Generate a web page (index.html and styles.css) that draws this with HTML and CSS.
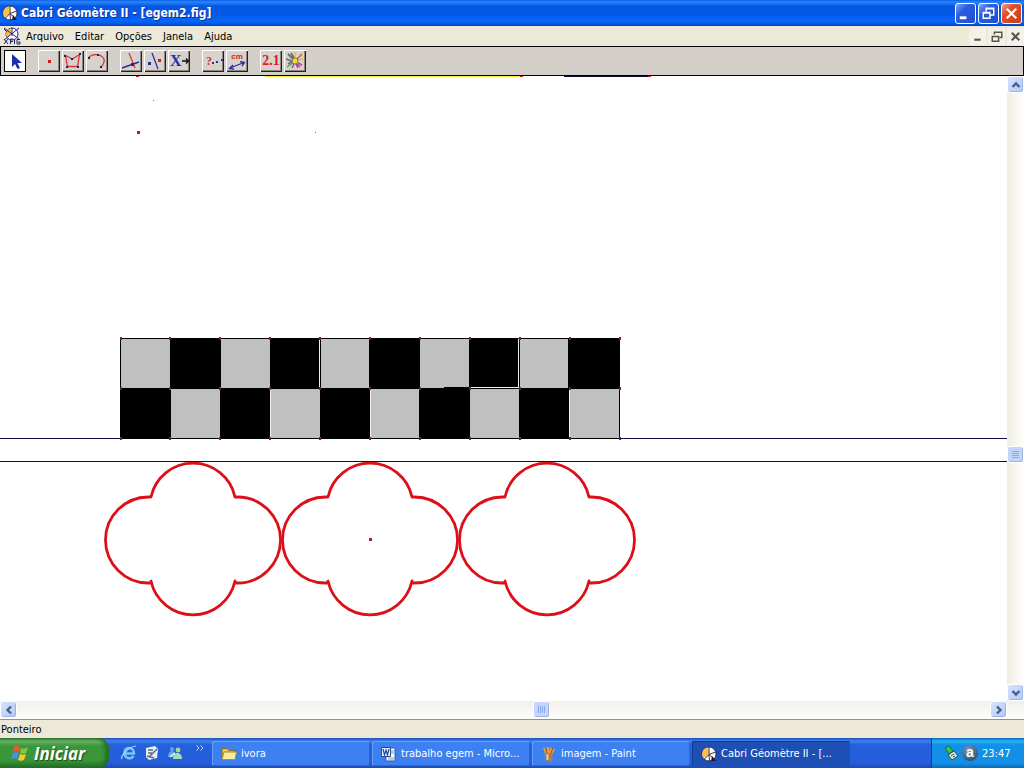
FILE: index.html
```html
<!DOCTYPE html>
<html lang="pt">
<head>
<meta charset="utf-8">
<title>Cabri Géomètre II - [egem2.fig]</title>
<link rel="stylesheet" href="styles.css">
</head>
<body>
<svg class="defs" aria-hidden="true">
  <defs>
    <symbol id="cabri" viewBox="0 0 16 16">
      <circle cx="8" cy="8" r="7" fill="#fff" stroke="#221a2c" stroke-width=".8"/>
      <path d="M7 1.500A6.500 6.500 0 0 0 2.500 12L8 9Z" fill="#ffc04a"/>
      <path d="M3.500 13L8 8.500L8 1M8 8.500L14.500 6M8 8.500L13 13M8 9L8.500 15" fill="none" stroke="#221a2c" stroke-width=".9"/>
      <path d="M11 10l4 5h-5z" fill="#221a2c"/>
    </symbol>
    <symbol id="quatrefoil" viewBox="0 0 180 156" overflow="visible">
      <path d="M48 36A43 43 0 0 1 132 36H134.500A43 43 0 0 1 134.500 122H132V120A43 43 0 0 1 48 120V122H45.500A43 43 0 0 1 45.500 36Z" fill="none" stroke="#dc1018" stroke-width="2.800" stroke-linejoin="round"/>
    </symbol>
    <symbol id="arrow" viewBox="0 0 10 10">
      <path d="M1.500 7L5 3.500L8.500 7" fill="none" stroke="#43608c" stroke-width="2.400"/>
    </symbol>
  </defs>
</svg>
<div class="desktop">
  <header class="titlebar">
    <svg class="icon16"><use href="#cabri"/></svg>
    <h1 class="title">Cabri Géomètre II - [egem2.fig]</h1>
    <div class="winbuttons">
      <button class="winbtn" aria-label="Minimizar"><svg viewBox="0 0 20 20"><path d="M4 13h7v3H4z" fill="#fff"/></svg></button>
      <button class="winbtn" aria-label="Restaurar"><svg viewBox="0 0 20 20"><path d="M7.500 8V4.500h8v7H12M7 5h9M4.500 9h7v6h-7zM4 9.500h8" fill="none" stroke="#fff" stroke-width="1.500"/></svg></button>
      <button class="winbtn winbtn-close" aria-label="Fechar"><svg viewBox="0 0 20 20"><path d="M5 5l10 10M15 5L5 15" stroke="#fff" stroke-width="2.400"/></svg></button>
    </div>
  </header>

  <nav class="menubar">
    <svg class="figicon" viewBox="0 0 18 18">
      <circle cx="9" cy="7" r="6" fill="#fff" stroke="#29238e"/>
      <path d="M8 1.500A5.500 5.500 0 0 0 4 10L8 7Z" fill="#ffb92e"/>
      <path d="M1 1l15 11M16 1L1 13M9 1v8M1 2l3 3" stroke="#29238e" fill="none"/>
      <path d="M1 12l4 5M5 12l-4 5M7.500 17v-5H10M7.500 14.500H10M11.500 12v5M17 12.500h-3V17h3v-2h-2" stroke="#231d6c" fill="none"/>
    </svg>
    <div class="menus">
      <button class="menu">Arquivo</button>
      <button class="menu">Editar</button>
      <button class="menu">Opções</button>
      <button class="menu">Janela</button>
      <button class="menu">Ajuda</button>
    </div>
    <div class="mdibuttons">
      <button class="mdibtn" aria-label="Minimizar figura"><svg viewBox="0 0 16 16"><path d="M5 11h6" stroke="#59564c" stroke-width="2"/></svg></button>
      <button class="mdibtn" aria-label="Restaurar figura"><svg viewBox="0 0 16 16"><path d="M6 6V4h7v5h-2M6 4h7M4 8h6v4.500H4zM4 8h6" fill="none" stroke="#59564c" stroke-width="1.400"/></svg></button>
      <button class="mdibtn" aria-label="Fechar figura"><svg viewBox="0 0 16 16"><path d="M4.500 4.500l7 7M11.500 4.500l-7 7" stroke="#59564c" stroke-width="2"/></svg></button>
    </div>
  </nav>

  <div class="toolbar" role="toolbar" aria-label="Ferramentas">
    <div class="tools">
      <button class="tool tool-active" aria-label="Ponteiro"><svg viewBox="0 0 22 22"><path d="M8 4v13l3-3 2.500 5 2.500-1-2.500-5H18z" fill="#1c2fb0"/></svg></button>
    </div>
    <div class="tools">
      <button class="tool" aria-label="Ponto"><svg viewBox="0 0 22 22"><path d="M10 10h3v3h-3z" fill="#e01820"/></svg></button>
      <button class="tool" aria-label="Polígono"><svg viewBox="0 0 22 22"><path d="M3.500 5.500L10.500 9L17.500 4.500L15.500 16.500H5.500z" fill="none" stroke="#d8343c" stroke-width="1.300"/><path d="M2 5h2v2H2zM9 8h2v2H9zM17 3h2v2h-2zM15 16h2v2h-2zM4 16h2v2H4z" fill="#22204c"/></svg></button>
      <button class="tool" aria-label="Curvas"><svg viewBox="0 0 22 22"><path d="M3 7C8 3 15 4 18 9c1 4-1 6-3 8" fill="none" stroke="#d8343c" stroke-width="1.300"/><path d="M2 7h2v2H2zM11 4h2v2h-2zM14 16h2v2h-2z" fill="#22204c"/></svg></button>
    </div>
    <div class="tools">
      <button class="tool" aria-label="Construir"><svg viewBox="0 0 22 22"><path d="M2 18l17-6" stroke="#2630a4" stroke-width="1.400"/><path d="M9 3l6 15" stroke="#d8343c" stroke-width="1.300"/><path d="M11 13h3v3h-3z" fill="#33236c"/></svg></button>
      <button class="tool" aria-label="Transformar"><svg viewBox="0 0 22 22"><path d="M8 3l6 16" stroke="#2630a4" stroke-width="1.300"/><path d="M4 12h3v3H4z" fill="#2630a4"/><path d="M14 9h3v3h-3z" fill="#e01820"/></svg></button>
      <button class="tool tool-x" aria-label="Macro">X<svg class="xarrow" viewBox="0 0 8 8"><path d="M0 4h6M4 1.500L6.500 4L4 6.500" fill="none" stroke="#111" stroke-width="1.300"/></svg></button>
    </div>
    <div class="tools">
      <button class="tool tool-q" aria-label="Propriedades">?<svg class="qdots" viewBox="0 0 12 8"><path d="M0 5h2v2H0zM4 4h2v2H4zM9 2h2v2H9z" fill="#2630a4"/></svg></button>
      <button class="tool tool-cm" aria-label="Medir">cm<svg viewBox="0 0 18 9"><path d="M2 7L16 1.500M5 4L1.500 7.500L6 8M12 .500L16.500 1.500L14 5" fill="none" stroke="#2630a4" stroke-width="1.300"/></svg></button>
    </div>
    <div class="tools">
      <button class="tool tool-num" aria-label="Exibir">2.1</button>
      <button class="tool" aria-label="Desenho"><svg viewBox="0 0 22 22"><path d="M11 2v5M19 9l-5 1" stroke="#e8c01c" stroke-width="1.400"/><path d="M18 15l-4-2M14 18l-2-4M8 18l2-4M16 17l-3-3" stroke="#b03c9c" stroke-width="1.400"/><path d="M4 14l5-3M2 9l6 2M4 4l5 5M7 3l3 5" stroke="#687078" stroke-width="1.800"/><circle cx="11" cy="11" r="3" fill="#f6dc22" stroke="#777a68"/><path d="M3 17l6-4" stroke="#3da75a" stroke-width="1.300"/><path d="M13 9l5-5" stroke="#e34a2e" stroke-width="1.300"/></svg></button>
    </div>
  </div>

  <main class="work">
    <svg class="drawing" role="img" aria-label="Figura geométrica">
      <g transform="translate(0 -76)">
        <path d="M265 76h255" stroke="#f2ee3c" stroke-width="2"/>
        <path d="M564 76h85" stroke="#0c0a3c" stroke-width="2"/>
        <path d="M136 75h3v2h-3zM520 75h3v2h-3zM648 75h3v2h-3zM137 131h3v3h-3z" fill="#c8141c"/>
        <path d="M153 100h1v1h-1zM315 132h1v1h-1z" fill="#777"/>
        <g shape-rendering="crispEdges">
          <path d="M120 338h500v101H120z" fill="#000"/>
          <path d="M121 339h49v49h-49zM221 339h49v49h-49zM321 339h48v49h-48zM420 339h49v49h-49zM520 339h48v49h-48zM171 389h49v49h-49zM271 389h49v49h-49zM371 389h48v49h-48zM470 389h49v49h-49zM570 389h49v49h-49z" fill="#c0c0c0"/>
          <path d="M444 387h25v2h-25z" fill="#000"/>
          <path d="M319 339h1v49h-1zM270 389h1v49h-1zM370 389h1v49h-1zM518 339h1v49h-1zM569 389h1v49h-1zM470 387h49v1h-49z" fill="#eee"/>
          <path d="M119.500 338.500h501M119.500 388.500h501M119.500 438.500h501" stroke="#8c1824" stroke-width="3" stroke-dasharray="2 47.900"/>
          <path d="M0 438h120v1H0zM0 461h3000v1H0zM620 438h2400v1H620z" fill="#0e0a4c"/>
        </g>
        <use href="#quatrefoil" x="103" y="461" width="180" height="156"/>
        <use href="#quatrefoil" x="280" y="461" width="180" height="156"/>
        <use href="#quatrefoil" x="457" y="461" width="180" height="156"/>
        <path d="M369 538h3v3h-3z" fill="#c8141c"/>
      </g>
    </svg>
    <div class="vscroll">
      <button class="sbtn" aria-label="Para cima"><svg class="chev"><use href="#arrow"/></svg></button>
      <div class="track track-before"></div>
      <button class="sbtn thumb" aria-label="Posição vertical"><svg class="chev" viewBox="0 0 10 10"><path d="M1 1.500h7M1 3.500h7M1 5.500h7M1 7.500h7" stroke="#8ba9ea"/></svg></button>
      <div class="track track-after-v"></div>
      <button class="sbtn" aria-label="Para baixo"><svg class="chev down"><use href="#arrow"/></svg></button>
    </div>
  </main>
  <div class="hscroll">
    <button class="sbtn" aria-label="Para a esquerda"><svg class="chev left"><use href="#arrow"/></svg></button>
    <div class="track track-before-h"></div>
    <button class="sbtn thumb" aria-label="Posição horizontal"><svg class="chev" viewBox="0 0 10 10"><path d="M1.500 1v7M3.500 1v7M5.500 1v7M7.500 1v7" stroke="#8ba9ea"/></svg></button>
    <div class="track track-after-h"></div>
    <button class="sbtn" aria-label="Para a direita"><svg class="chev right"><use href="#arrow"/></svg></button>
  </div>
  <div class="status">Ponteiro</div>

  <footer class="taskbar">
    <button class="start">
      <svg class="flag" viewBox="0 0 18 18">
        <path d="M3 3c2-2 4-1 6 0L8 8C6 7 4 7 2 8z" fill="#ee5a2c"/><path d="M10 4c2 1 4 1 7-1l-2 6c-2 1-4 1-6 0z" fill="#86c440"/>
        <path d="M2 9c2-1 4-1 6 0l-2 6c-2-1-4-1-6 0z" fill="#4c8cf0"/><path d="M9 10c2 1 4 1 6 0l-2 6c-2 1-4 1-6 0z" fill="#fcc82c"/>
      </svg>
      Iniciar
    </button>
    <div class="quick">
      <button class="quickbtn" aria-label="Internet Explorer"><svg viewBox="0 0 18 18"><path d="M4.500 9.500H14C14 5.500 11 4 9 4C6 4 4.500 6.500 4.500 9.500C4.500 14 11 16 13.500 12" fill="none" stroke="#76c6f8" stroke-width="2.500"/><path d="M2 15C0 13 8 3 16 2" fill="none" stroke="#a8dcf8" stroke-width="1.200"/></svg></button>
      <button class="quickbtn" aria-label="Mostrar área de trabalho"><svg viewBox="0 0 18 18"><path d="M3 4l9-2 3 3-1 9-8 2-3-3z" fill="#eaf0f0"/><path d="M5 6h5M5 9h4M6 13l8-8M4 12l7 2" stroke="#536a94" stroke-width="1.500"/></svg></button>
      <button class="quickbtn" aria-label="Messenger"><svg viewBox="0 0 18 18"><circle cx="6" cy="5" r="2" fill="#5ca8e0"/><path d="M2 13c0-8 8-8 8 0z" fill="#5ca8e0"/><circle cx="12" cy="6" r="2.400" fill="#9cdc98"/><path d="M7 15c0-8 9-8 9 0z" fill="#a4dcb0"/><path d="M4 13l5-4" stroke="#e8fff0" stroke-width="1.500"/></svg></button>
      <svg class="more" viewBox="0 0 8 6"><path d="M.500.500L3 3L.500 5.500M4.500.500L7 3L4.500 5.500" fill="none" stroke="#c8dcff"/></svg>
    </div>
    <div class="tasks">
      <button class="task"><svg class="icon16" viewBox="0 0 16 16"><path d="M1 2.500h5l2 2h6v9H1z" fill="#f0c450" stroke="#80682c"/><path d="M1 13.500L3 6h12.500L14 13.500z" fill="#fdec94" stroke="#a88a3c"/></svg><span class="label">ivora</span></button>
      <button class="task"><svg class="icon16" viewBox="0 0 16 16"><path d="M5 2h9v13H5z" fill="#fff" stroke="#355c9c"/><path d="M10 5h3M10 7h3M7 12h6M7 14h6" stroke="#7894c4"/><path d="M.500 1.500h9v9h-9z" fill="#e8f0fc" stroke="#254c94"/><path d="M2 3l1.500 6L5 4l1.500 5L8 3" fill="none" stroke="#254c94" stroke-width="1.200"/></svg><span class="label">trabalho egem - Micro...</span></button>
      <button class="task"><svg class="icon16" viewBox="0 0 16 16"><path d="M5 7L3 2M7 7V1M9 7l1-5M10 8l3-5" stroke="#e6a040" stroke-width="2"/><path d="M6 7L5 3M10 7l2-5" stroke="#b8442c"/><path d="M3 7h9l-1 8.500h-6z" fill="#a87c54"/><path d="M6.500 8v6" stroke="#e0cca4" stroke-width="2"/></svg><span class="label">imagem - Paint</span></button>
      <button class="task task-active"><svg class="icon16"><use href="#cabri"/></svg><span class="label">Cabri Géomètre II - [...</span></button>
    </div>
    <div class="tray">
      <svg class="icon16" viewBox="0 0 16 16"><path d="M5 10l6-4 4 5-6 4z" fill="#dce6dc" stroke="#324854"/><path d="M2 3l4-2 4 5-4 3z" fill="#38c84c" stroke="#1c6c34"/><path d="M8 11l3-2M10 12l2-1" stroke="#324854"/></svg>
      <span class="avast">a</span>
      <time class="clock">23:47</time>
    </div>
  </footer>
</div>
</body>
</html>
```
FILE: styles.css
```css
* { box-sizing: border-box; }
body {
  margin: 0;
  font-family: "DejaVu Sans Condensed", "DejaVu Sans", sans-serif;
  font-size: 11px;
  color: #000;
}
button {
  margin: 0;
  padding: 0;
  border: 0;
  background: none;
  font: inherit;
  color: inherit;
}
svg { display: block; flex: none; }
.defs { position: absolute; width: 0; height: 0; }
.desktop {
  display: flex;
  flex-direction: column;
  height: 100vh;
  overflow: hidden;
  background: #ece9d8;
}
.icon16 { width: 16px; height: 16px; }

.titlebar {
  display: flex;
  align-items: center;
  height: 26px;
  padding: 0 2px;
  background: linear-gradient(#0a5fe8, #2a86fb 2px, #0558e4 6px, #0458e6 14px, #0766fc 21px, #0450d8 25px, #0038b0);
}
.title {
  flex: 1;
  margin: 0 0 0 3px;
  color: #fff;
  font-size: 12px;
  font-weight: bold;
  text-shadow: 1px 1px #0c2c90;
}
.winbuttons { display: flex; gap: 2px; }
.winbtn {
  width: 21px;
  height: 21px;
  border: 1px solid #fff;
  border-radius: 3px;
  background: linear-gradient(135deg, #7fa4f4, #2c5ee0 35%, #1d4ed0);
}
.winbtn-close { background: linear-gradient(135deg, #f0a088, #e0502c 35%, #c83c14); }

.menubar {
  display: flex;
  align-items: center;
  gap: 5px;
  height: 20px;
  padding-left: 3px;
}
.figicon { width: 18px; height: 18px; }
.menus { display: flex; gap: 11px; }
.mdibuttons { display: flex; gap: 2px; margin-left: auto; }
.mdibtn { width: 17px; height: 17px; background: #f3f1e8; }

.toolbar {
  display: flex;
  align-items: center;
  gap: 12px;
  height: 30px;
  padding-left: 3px;
  border: 1px solid #000;
  background: #d4cec8;
}
.tools { display: flex; gap: 2px; }
.tool {
  width: 22px;
  height: 22px;
  background: #d8d2cc;
  box-shadow: inset 1px 1px #fff, inset -1px -1px #222, inset -2px -2px #8a8580;
}
.tool-active { background: #fff; box-shadow: inset 0 0 0 1px #000; }
.tool-x {
  display: flex;
  align-items: center;
  padding-left: 2px;
  color: #2630a4;
  font: bold 16px "Liberation Serif", serif;
}
.xarrow { width: 8px; height: 8px; }
.tool-q {
  display: flex;
  align-items: center;
  padding-left: 4px;
  color: #d8343c;
  font: bold 12px "Liberation Serif", serif;
}
.qdots { width: 12px; height: 8px; }
.tool-cm {
  padding: 1px 2px;
  color: #e01820;
  font: bold 8px "Liberation Sans", sans-serif;
}
.tool-num { color: #e01820; font: bold 14px "Liberation Serif", serif; }

.work { display: flex; flex: 1; min-height: 0; }
.drawing {
  flex: 1;
  min-width: 0;
  height: 100%;
  background: #fff;
}
.vscroll {
  display: flex;
  flex-direction: column;
  width: 17px;
  background: linear-gradient(90deg, #f0eee4, #fefefb);
}
.hscroll {
  display: flex;
  height: 18px;
  padding-right: 17px;
  background: linear-gradient(#f0efe8, #fefefb);
}
.track-before { flex: 354 0 0; }
.track-after-v { flex: 221 0 0; }
.track-before-h { flex: 516 0 0; }
.track-after-h { flex: 440 0 0; }
.sbtn {
  display: flex;
  align-items: center;
  justify-content: center;
  flex: none;
  width: 17px;
  height: 17px;
  border: 1px solid #fff;
  border-radius: 3px;
  background: linear-gradient(135deg, #d6e2fe, #b4c9f6);
  box-shadow: inset -1px -1px #9cb4e4;
}
.thumb { background: #c4d5fb; }
.chev { width: 10px; height: 10px; }
.down { transform: rotate(180deg); }
.left { transform: rotate(270deg); }
.right { transform: rotate(90deg); }
.status {
  height: 19px;
  padding: 0 1px;
  border-top: 1px solid #96937f;
  line-height: 19px;
}

.taskbar {
  display: flex;
  height: 30px;
  background: linear-gradient(#1c50b8, #3c80f0 3px, #2560dc 7px, #245edb 25px, #1c4ab4);
  color: #fff;
}
.start {
  display: flex;
  align-items: center;
  gap: 5px;
  width: 109px;
  padding-left: 11px;
  border-radius: 0 10px 10px 0;
  background: linear-gradient(#2c7c2c, #6cb468 3px, #3c963c 8px, #389838 22px, #246c24);
  box-shadow: inset -4px 0 4px #246c24;
  font: italic bold 17px "Open Sans", sans-serif;
  text-shadow: 1px 1px 1px #1c481c;
}
.flag { width: 18px; height: 18px; }
.quick {
  display: flex;
  align-items: center;
  gap: 5px;
  width: 103px;
  padding-left: 11px;
}
.quickbtn, .quickbtn svg { width: 18px; height: 18px; }
.more { width: 8px; height: 6px; margin: 0 0 10px 7px; }
.tasks { display: flex; flex: 1; gap: 2px; min-width: 0; padding: 3px 0 2px; }
.task {
  display: flex;
  align-items: center;
  gap: 4px;
  flex: 0 1 158px;
  min-width: 0;
  padding-left: 9px;
  border-radius: 2px;
  background: #3c80f2;
  box-shadow: inset 1px 1px #6ba0f8, inset -1px -1px #2c64d0;
}
.task-active { background: #1e4fb4; box-shadow: inset 1px 1px 1px #123a8c; }
.label { overflow: hidden; white-space: nowrap; }
.tray {
  display: flex;
  align-items: center;
  gap: 3px;
  width: 93px;
  padding-left: 11px;
  border-left: 1px solid #0c3c9c;
  background: linear-gradient(#0c64b8, #26b4f4 3px, #1290e8 7px, #1290e8 25px, #0c68b8);
}
.avast {
  width: 16px;
  height: 16px;
  border-radius: 8px;
  background: radial-gradient(circle at 40% 30%, #7c96b8, #203c60);
  font: bold 14px/14px "Liberation Sans", sans-serif;
  text-align: center;
}
.clock { margin-left: 1px; }
```
